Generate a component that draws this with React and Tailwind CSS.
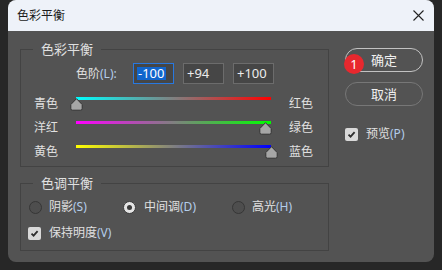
import React from "react";

const Tint = ({ children }) => <span className="text-[#b3cdea]">{children}</span>;

function Thumb({ value }) {
  const pos = ((value + 100) / 200) * 195;
  return (
    <svg
      width="13"
      height="13"
      viewBox="0 0 13 13"
      className="absolute top-[1px]"
      style={{ left: pos - 6.5 }}
    >
      <path
        d="M6.5 0.7 L12.2 6.6 V10.4 Q12.2 12.2 10.4 12.2 H2.6 Q0.8 12.2 0.8 10.4 V6.6 Z"
        fill="#a6a6a6"
        stroke="#333333"
        strokeWidth="1"
      />
    </svg>
  );
}

function SliderRow({ left, right, grad, value }) {
  return (
    <div className="flex h-[14px] items-start pl-[13px]">
      <span className="w-[24px] text-[12px] leading-[14px] text-[#e0e0e0] whitespace-nowrap">{left}</span>
      <div className={`relative ml-[18px] h-[3px] w-[195px] ${grad}`}>
        <Thumb value={value} />
      </div>
      <span className="ml-[18px] w-[26px] text-[12px] leading-[14px] text-[#e0e0e0] whitespace-nowrap">{right}</span>
    </div>
  );
}

function Radio({ checked }) {
  return checked ? (
    <span className="flex h-[13px] w-[13px] shrink-0 items-center justify-center rounded-full border border-[#3a3a3a] bg-[#e4e4e4]">
      <span className="h-[5px] w-[5px] rounded-full bg-[#3a3a3a]" />
    </span>
  ) : (
    <span className="h-[13px] w-[13px] shrink-0 rounded-full border border-[#363636] bg-[#4e4e4e]" />
  );
}

function Check() {
  return (
    <span className="flex h-[13px] w-[13px] shrink-0 items-center justify-center rounded-[2px] bg-[#d9d9d9]">
      <svg width="9" height="9" viewBox="0 0 9 9">
        <path d="M1.5 4.6 L3.6 6.7 L7.6 2.2" fill="none" stroke="#2e2e2e" strokeWidth="1.8" />
      </svg>
    </span>
  );
}

export default function App() {
  return (
    <div className="h-[270px] w-[442px] bg-[#272727] px-2 pb-2 font-['Noto_Sans','Noto_Sans_CJK_SC',sans-serif]">
      <div className="flex h-full flex-col overflow-hidden rounded-lg bg-[#535353]">
        <div className="flex h-[31px] shrink-0 items-center justify-between bg-[#eef2f9] pl-[9px] pr-[10px]">
          <span className="text-[12px] leading-[14px] text-[#1b1b1b]">色彩平衡</span>
          <svg width="11" height="11" viewBox="0 0 11 11">
            <path d="M0.5 0.5 L10.5 10.5 M10.5 0.5 L0.5 10.5" stroke="#222" strokeWidth="1.1" />
          </svg>
        </div>
        <div className="flex flex-1 pl-3">
          <div className="w-[309px] pt-[18px]">
            <div className="relative h-[118px] border border-[#434343] pt-[13px]">
              <span className="absolute left-[12px] top-[-9px] bg-[#535353] px-[8px] text-[13px] leading-[16px] text-[#e0e0e0]">
                色彩平衡
              </span>
              <div className="flex h-[21px] items-center gap-[10px] pl-[55px]">
                <span className="w-[47px] whitespace-nowrap text-[12px] leading-[14px] text-[#e0e0e0]">
                  色阶<Tint>(L):</Tint>
                </span>
                <div className="flex gap-[9px]">
                  <div className="flex h-[21px] w-[41px] items-center border border-[#2878e0] bg-[#464646] pl-[3px]">
                    <span className="bg-[#1165cc] px-[1px] text-[13px] leading-[13px] text-white">-100</span>
                  </div>
                  <div className="flex h-[21px] w-[41px] items-center border border-[#6c6c6c] bg-[#464646] pl-[3px] text-[13px] leading-[13px] text-[#ececec]">
                    +94
                  </div>
                  <div className="flex h-[21px] w-[41px] items-center border border-[#6c6c6c] bg-[#464646] pl-[3px] text-[13px] leading-[13px] text-[#ececec]">
                    +100
                  </div>
                </div>
              </div>
              <div className="mt-[13px] flex flex-col gap-[10px]">
                <SliderRow left="青色" right="红色" value={-100} grad="bg-linear-to-r/srgb from-[#00ffff] via-[#808080] to-[#ff0000]" />
                <SliderRow left="洋红" right="绿色" value={94} grad="bg-linear-to-r/srgb from-[#ff00ff] via-[#808080] to-[#00ff00]" />
                <SliderRow left="黄色" right="蓝色" value={100} grad="bg-linear-to-r/srgb from-[#ffff00] via-[#808080] to-[#0000ff]" />
              </div>
            </div>
            <div className="relative mt-[16px] h-[68px] border border-[#434343] pt-[15px]">
              <span className="absolute left-[12px] top-[-9px] bg-[#535353] px-[8px] text-[13px] leading-[16px] text-[#e0e0e0]">
                色调平衡
              </span>
              <div className="flex h-[16px] items-center pl-[8px] text-[12px] leading-[14px] text-[#e0e0e0]">
                <div className="flex w-[94px] items-center gap-[7px]">
                  <Radio />
                  <span className="whitespace-nowrap">阴影<Tint>(S)</Tint></span>
                </div>
                <div className="flex w-[109px] items-center gap-[8px]">
                  <Radio checked />
                  <span className="whitespace-nowrap">中间调<Tint>(D)</Tint></span>
                </div>
                <div className="flex items-center gap-[7px]">
                  <Radio />
                  <span className="whitespace-nowrap">高光<Tint>(H)</Tint></span>
                </div>
              </div>
              <div className="mt-[10px] flex h-[16px] items-center gap-[8px] pl-[7px] text-[12px] leading-[14px] text-[#e0e0e0]">
                <Check />
                <span className="whitespace-nowrap">保持明度<Tint>(V)</Tint></span>
              </div>
            </div>
          </div>
          <div className="ml-[16px] w-[78px] pt-[17px]">
            <div className="relative">
              <button className="flex h-[24px] w-[78px] items-center justify-center rounded-full border-[1.5px] border-[#c2c2c2] text-[13px] leading-[14px] text-[#f0f0f0]">
                确定
              </button>
              <span className="absolute left-[-1px] top-[6px] flex h-[20px] w-[20px] items-center justify-center rounded-full bg-[#e8282e] text-[13px] leading-[14px] text-white">
                1
              </span>
            </div>
            <button className="mt-[10px] flex h-[24px] w-[78px] items-center justify-center rounded-full border border-[#777777] text-[13px] leading-[14px] text-[#f0f0f0]">
              取消
            </button>
            <div className="mt-[21px] flex items-center gap-[8px] text-[12px] leading-[14px] text-[#e0e0e0]">
              <Check />
              <span className="whitespace-nowrap">预览<Tint>(P)</Tint></span>
            </div>
          </div>
        </div>
      </div>
    </div>
  );
}
